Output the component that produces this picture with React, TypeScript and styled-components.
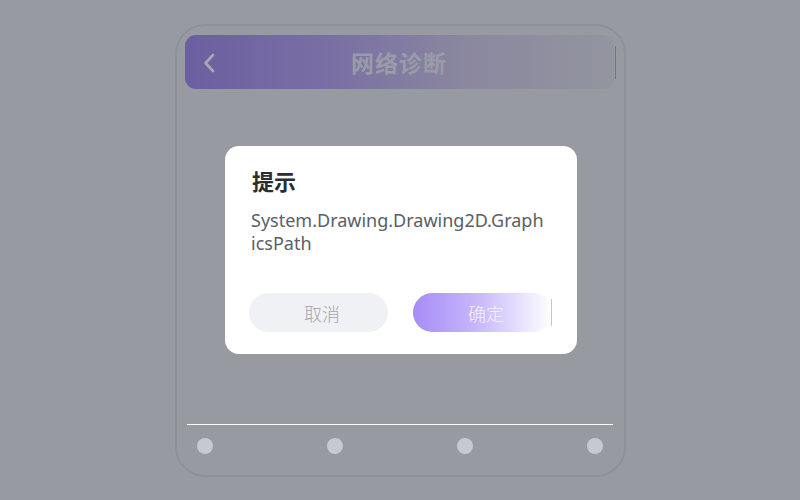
import React from "react";
import styled, { createGlobalStyle } from "styled-components";

const Global = createGlobalStyle`
  html, body { margin: 0; padding: 0; }
  body {
    width: 800px;
    height: 500px;
    background: #979aa1;
    font-family: "Noto Sans", "Noto Sans CJK SC", sans-serif;
    overflow: hidden;
  }
`;

const Stage = styled.div`
  width: 800px;
  height: 500px;
  display: flex;
  justify-content: center;
  padding-top: 24px;
  box-sizing: border-box;
`;

const Phone = styled.div`
  width: 451px;
  height: 453px;
  box-sizing: border-box;
  border: 2px solid #8e9198;
  border-radius: 30px;
  padding: 9px 10px 0 8px;
  display: flex;
  flex-direction: column;
`;

const Header = styled.div`
  position: relative;
  height: 54px;
  border-radius: 11px;
  background: linear-gradient(90deg, #6b5fa1 0%, #7a70a4 35%, #8a879f 65%, #93959f 100%);
  display: flex;
  align-items: center;
  justify-content: center;
  &::after {
    content: "";
    position: absolute;
    right: -2px;
    top: 11px;
    width: 1px;
    height: 33px;
    background: #746ca6;
  }
`;

const Back = styled.svg`
  position: absolute;
  left: 17px;
  top: 17px;
`;

const HeaderTitle = styled.h1`
  margin: 0 0 0 0;
  font-family: "Noto Sans CJK SC", sans-serif;
  font-size: 23px;
  font-weight: 700;
  color: #999ca8;
  letter-spacing: 1px;
`;

const Body = styled.div`
  flex: 1;
`;

const Divider = styled.div`
  height: 1px;
  background: #ffffff;
  margin: 0 1px 0 2px;
`;

const DotRow = styled.div`
  display: flex;
  justify-content: space-between;
  padding: 13px 10px 0 12px;
  height: 50px;
  box-sizing: border-box;
`;

const Dot = styled.span`
  width: 16px;
  height: 16px;
  border-radius: 50%;
  background: #c7c9d1;
`;

const Backdrop = styled.div`
  position: fixed;
  inset: 0;
  display: flex;
  align-items: center;
  justify-content: center;
  padding-left: 2px;
`;

const Dialog = styled.div`
  width: 352px;
  height: 208px;
  box-sizing: border-box;
  background: #ffffff;
  border-radius: 14px;
  padding: 19px 24px 0 24px;
  display: flex;
  flex-direction: column;
`;

const Title = styled.h2`
  margin: 0 0 0 3px;
  font-family: "Noto Sans CJK SC", sans-serif;
  font-size: 22px;
  line-height: 30px;
  font-weight: 700;
  color: #2b2d33;
`;

const Message = styled.p`
  margin: 14px 0 0 2px;
  width: 295px;
  font-size: 18px;
  font-weight: 400;
  line-height: 23px;
  color: #5a5e66;
  word-break: break-all;
`;

const Actions = styled.div`
  margin-top: auto;
  margin-bottom: 22px;
  display: flex;
  gap: 25px;
`;

const Button = styled.button<{ $primary?: boolean }>`
  position: relative;
  width: 139px;
  height: 39px;
  border: none;
  border-radius: 20px;
  font-family: "Noto Sans CJK SC", sans-serif;
  font-size: 18px;
  font-weight: 300;
  padding: 0 0 0 7px;
  background: ${(p) =>
    p.$primary ? "linear-gradient(90deg, #a68cf7 0%, #c6b6fb 45%, #ffffff 100%)" : "#f0f1f4"};
  color: ${(p) => (p.$primary ? "#f6f3fe" : "#a3a6ae")};
  ${(p) =>
    p.$primary
      ? `&::after {
    content: "";
    position: absolute;
    right: 0;
    top: 6px;
    width: 1px;
    height: 27px;
    background: #cbbcf8;
  }`
      : ""}
`;

export default function App() {
  return (
    <>
      <Global />
      <Stage>
        <Phone>
          <Header>
            <Back width="14" height="22" viewBox="0 0 14 22">
              <path d="M11 3 L3.5 11 L11 19" fill="none" stroke="#a7a9b4" strokeWidth="2.6" strokeLinecap="round" strokeLinejoin="round" />
            </Back>
            <HeaderTitle>网络诊断</HeaderTitle>
          </Header>
          <Body />
          <Divider />
          <DotRow>
            <Dot />
            <Dot />
            <Dot />
            <Dot />
          </DotRow>
        </Phone>
      </Stage>
      <Backdrop>
        <Dialog>
          <Title>提示</Title>
          <Message>System.Drawing.Drawing2D.GraphicsPath</Message>
          <Actions>
            <Button>取消</Button>
            <Button $primary>确定</Button>
          </Actions>
        </Dialog>
      </Backdrop>
    </>
  );
}
